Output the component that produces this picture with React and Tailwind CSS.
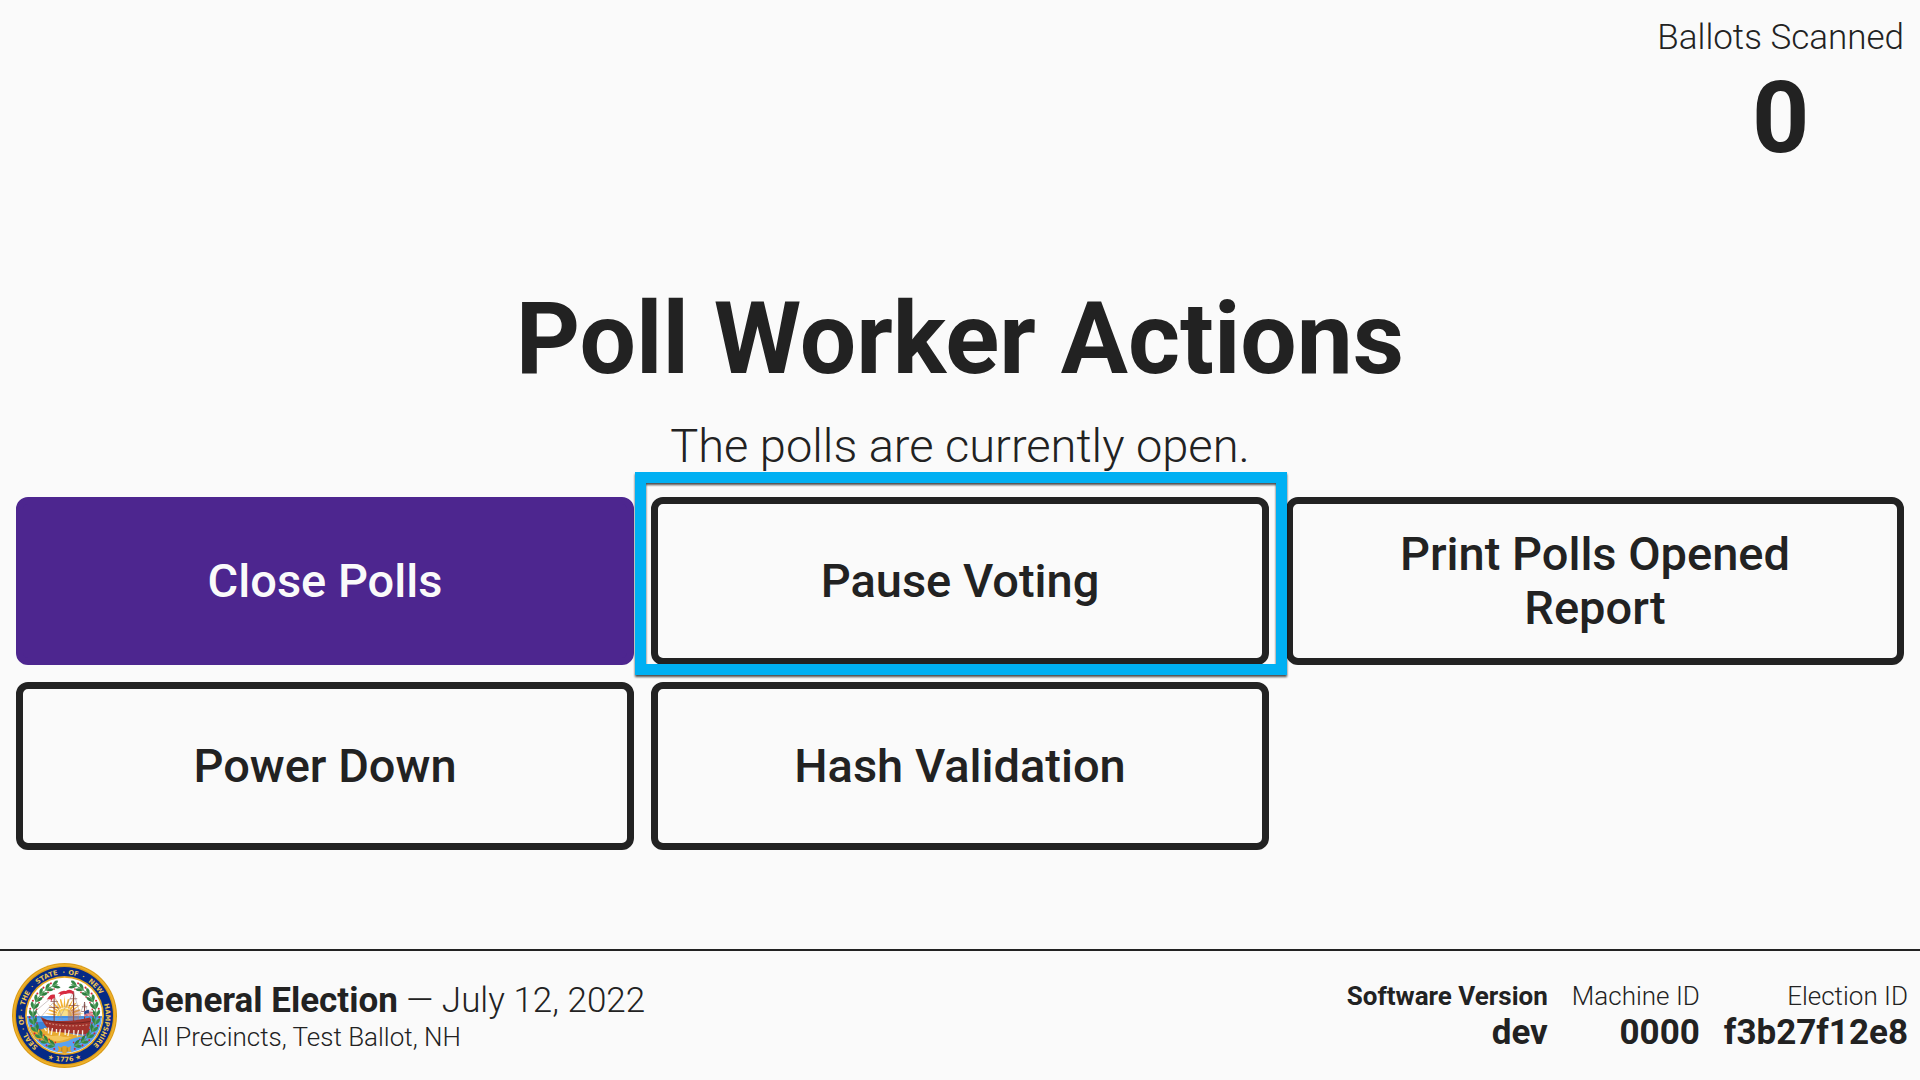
import React from "react";

const SEAL_WORDS = [
  { text: "SEAL", angle: -127 },
  { text: "·", angle: -108 },
  { text: "OF", angle: -96 },
  { text: "·", angle: -83 },
  { text: "THE", angle: -66 },
  { text: "·", angle: -48 },
  { text: "STATE", angle: -25 },
  { text: "·", angle: -1 },
  { text: "OF", angle: 12 },
  { text: "·", angle: 26 },
  { text: "NEW", angle: 47 },
  { text: "HAMPSHIRE", angle: 105 },
];

const LEAF_ANGLES = [18, 32, 46, 60, 74, 88, 102, 116, 130, 144, 158];
const RAY_ANGLES = [-84, -70, -56, -42, -28, -14, 0, 14, 28, 42, 56, 70, 84];

function LaurelBranch({ side }) {
  return (
    <g transform={side === "left" ? "scale(-1 1)" : undefined}>
      <path d="M 22 -92 A 95 95 0 0 1 40 86" fill="none" stroke="#3c8a4a" strokeWidth="2" />
      {LEAF_ANGLES.map((a) => (
        <g key={a} transform={`rotate(${a})`}>
          <path d="M 8 -95 Q -2 -112 -14 -105 Q -9 -94 8 -95 Z" fill="#358847" />
          <path d="M 8 -94 Q -4 -78 -15 -84 Q -8 -96 8 -94 Z" fill="#2f7d3f" />
          <path d="M 10 -95 Q 0 -100 -12 -94 Q -2 -89 10 -95 Z" fill="#57a060" />
          <circle cx="9" cy="-104" r="3" fill="#cf2338" />
          <circle cx="5" cy="-85" r="2.5" fill="#cf2338" />
        </g>
      ))}
    </g>
  );
}

function StateSeal() {
  return (
    <svg
      className="size-[105px] shrink-0"
      viewBox="-157 -157 314 314"
      role="img"
      aria-label="Seal of the State of New Hampshire"
    >
      <defs>
        <path id="seal-ring" d="M 0 123 A 123 123 0 0 1 0 -123 A 123 123 0 0 1 0 123" />
        <path id="seal-base" d="M -138 0 A 138 138 0 0 0 138 0" />
        <clipPath id="seal-scene">
          <circle r="112" />
        </clipPath>
      </defs>
      <circle r="157" fill="#d99a17" />
      <circle r="151" fill="none" stroke="#eeb02a" strokeWidth="5" />
      <circle r="145" fill="#062a86" />
      <circle r="118" fill="#e6a621" />
      <circle r="113" fill="#ffffff" />
      <g clipPath="url(#seal-scene)">
        {RAY_ANGLES.map((a, i) => (
          <path
            key={a}
            d={i % 2 === 0 ? "M -3 -24 L 0 -60 L 3 -24 Z" : "M -3 -24 L -2 -50 L 2 -50 L 3 -24 Z"}
            fill="#f4b332"
            transform={`rotate(${a})`}
          />
        ))}
        <circle r="22" fill="#f9cf52" />
        <circle r="16" fill="#fbe08a" />
        <rect x="-115" y="2" width="230" height="112" fill="#5aa2f2" />
        <rect x="-115" y="2" width="230" height="5" fill="#3f8ee4" />
        <path d="M -115 36 Q -60 28 -20 44 Q 20 56 60 62 Q 25 66 10 76 Q -20 84 -42 84 Q -70 70 -115 66 Z" fill="#e8ab31" />
        <path d="M -74 54 Q -50 64 -18 60 Q 2 68 22 64 Q 0 76 -28 77 Z" fill="#f4c65b" />
        <path d="M -84 20 Q -60 14 -44 32 L -70 42 L -92 38 Z" fill="#3a82d8" />
      </g>
      <LaurelBranch side="right" />
      <LaurelBranch side="left" />
      <g fill="none" stroke="#80413a">
        <path d="M -31 20 V -62" strokeWidth="3" />
        <path d="M 27 22 V -72" strokeWidth="3.5" />
        <path d="M 60 20 V -40" strokeWidth="3" />
        <path d="M -46 -24 H -18 M -42 -42 H -20 M 12 -30 H 42 M 16 -50 H 38 M 50 -12 H 70 M 52 -26 H 68" strokeWidth="2" />
        <path d="M -90 -20 L -72 6 M -88 -12 L -31 -60 M -72 6 L -31 -42 M -31 -62 L -6 14 M 27 -70 L -18 14 M 27 -70 L 52 14 M 60 -38 L 76 8 M 60 -38 L 38 14" stroke="#9c8c8c" strokeWidth="1.5" />
      </g>
      <path d="M 10 -18 H 44 V 14 H 10 Z" fill="#b56c60" opacity="0.45" />
      <path d="M -72 4 L -50 14 Q 10 22 76 6 L 80 12 L 72 48 Q 66 58 54 57 L -42 47 Q -58 34 -72 4 Z" fill="#a2322c" />
      <path d="M -66 13 Q 10 30 77 18" fill="none" stroke="#742420" strokeWidth="3" />
      <path d="M -56 22 Q 10 37 74 27" fill="none" stroke="#e7b8a2" strokeWidth="2.5" strokeDasharray="5 5" />
      <path d="M -60 38 L -54 47 M -48 36 V 54 M -36 38 L -40 58 M -24 40 V 52 M -12 41 L -16 60 M 2 42 V 58 M 14 43 L 10 62 M 28 43 V 58 M 42 44 L 38 62 M 54 44 V 60" fill="none" stroke="#f7eee4" strokeWidth="4" />
      <path d="M -29 -62 Q -40 -66 -47 -56 L -53 -48 L -42 -49 L -40 -42 Q -35 -54 -29 -52 Z" fill="#d82c40" />
      <path d="M 27 -72 Q 16 -82 4 -73 Q -8 -76 -20 -66 L -12 -64 L -16 -56 Q -6 -67 4 -64 Q 16 -70 27 -63 Z" fill="#d82c40" />
      <g>
        <path d="M 59 -12 Q 72 -20 85 -15 V 1 Q 72 -4 59 3 Z" fill="#f4e4e4" />
        <path d="M 60 -2 Q 72 -8 85 -4 M 60 -7 Q 72 -13 85 -9 M 60 2 Q 72 -4 85 0" fill="none" stroke="#cb3547" strokeWidth="2.5" />
        <path d="M 59 -12 Q 66 -17 73 -17 V -7 Q 66 -7 59 -3 Z" fill="#274995" />
      </g>
      <path d="M -20 91 L -10 96 L -4 91 H 4 L 10 96 L 20 91 L 17 101 L 22 111 L 9 107 L 4 114 H -4 L -9 107 L -22 111 L -17 101 Z" fill="#dfa12a" />
      <path d="M -8 96 V 108 M 8 96 V 108" stroke="#9d6d17" strokeWidth="2" />
      <g fill="#edc353" fontFamily="DejaVu Sans, sans-serif" fontWeight="700" fontSize="20" textAnchor="middle">
        {SEAL_WORDS.map(({ text, angle }) => (
          <text key={angle}>
            <textPath href="#seal-ring" startOffset={`${((angle + 180) / 360) * 100}%`}>
              {text}
            </textPath>
          </text>
        ))}
        <text>
          <textPath href="#seal-base" startOffset="50%">★ 1776 ★</textPath>
        </text>
      </g>
    </svg>
  );
}

function ActionButton({ primary = false, children }) {
  return (
    <button
      type="button"
      className={
        "h-[168px] w-full rounded-xl border-[7px] px-12 text-[47px] leading-[54px] font-medium " +
        (primary
          ? "border-[#4d268f] bg-[#4d268f] text-[#fafafa]"
          : "border-[#222222] bg-transparent text-[#222222]")
      }
    >
      {children}
    </button>
  );
}

function InfoItem({ label, value, strong = false }) {
  return (
    <div className="text-right">
      <dt className={"text-[26px] leading-[34px] " + (strong ? "font-bold" : "font-light")}>{label}</dt>
      <dd className="text-[35px] leading-10 font-bold">{value}</dd>
    </div>
  );
}

export default function App() {
  return (
    <div className="flex min-h-screen flex-col bg-[#fafafa] font-['Roboto',sans-serif] text-[#222222]">
      <header className="flex justify-end px-4 pt-4">
        <div className="text-center">
          <div className="text-[35px] leading-[44px] font-light">Ballots Scanned</div>
          <div className="text-[100px] leading-[116px] font-bold">0</div>
        </div>
      </header>

      <main className="flex flex-1 flex-col justify-center px-4 pt-1">
        <h1 className="text-center text-[100px] leading-[120px] font-bold">Poll Worker Actions</h1>
        <p className="mt-5 mb-6 text-center text-[47px] leading-[54px] font-light">
          The polls are currently open.
        </p>
        <div className="grid grid-cols-3 gap-[17px]">
          <ActionButton primary>Close Polls</ActionButton>
          <div className="relative">
            <ActionButton>Pause Voting</ActionButton>
            <div className="pointer-events-none absolute -top-[25px] -right-[18px] -bottom-[10px] -left-4 border-[11px] border-[#00b0f3] drop-shadow-[0_2px_1px_rgba(0,0,0,0.7)]" />
          </div>
          <ActionButton>Print Polls Opened Report</ActionButton>
          <ActionButton>Power Down</ActionButton>
          <ActionButton>Hash Validation</ActionButton>
        </div>
      </main>

      <footer className="flex items-center justify-between border-t-2 border-[#222222] p-3">
        <div className="flex items-center gap-6">
          <StateSeal />
          <div>
            <div className="text-[35px] leading-[42px] font-light">
              <strong className="font-bold">General Election</strong> — July 12, 2022
            </div>
            <div className="text-[26px] leading-[30px] font-light">All Precincts, Test Ballot, NH</div>
          </div>
        </div>
        <dl className="flex gap-6">
          <InfoItem label="Software Version" value="dev" strong />
          <InfoItem label="Machine ID" value="0000" />
          <InfoItem label="Election ID" value="f3b27f12e8" />
        </dl>
      </footer>
    </div>
  );
}
